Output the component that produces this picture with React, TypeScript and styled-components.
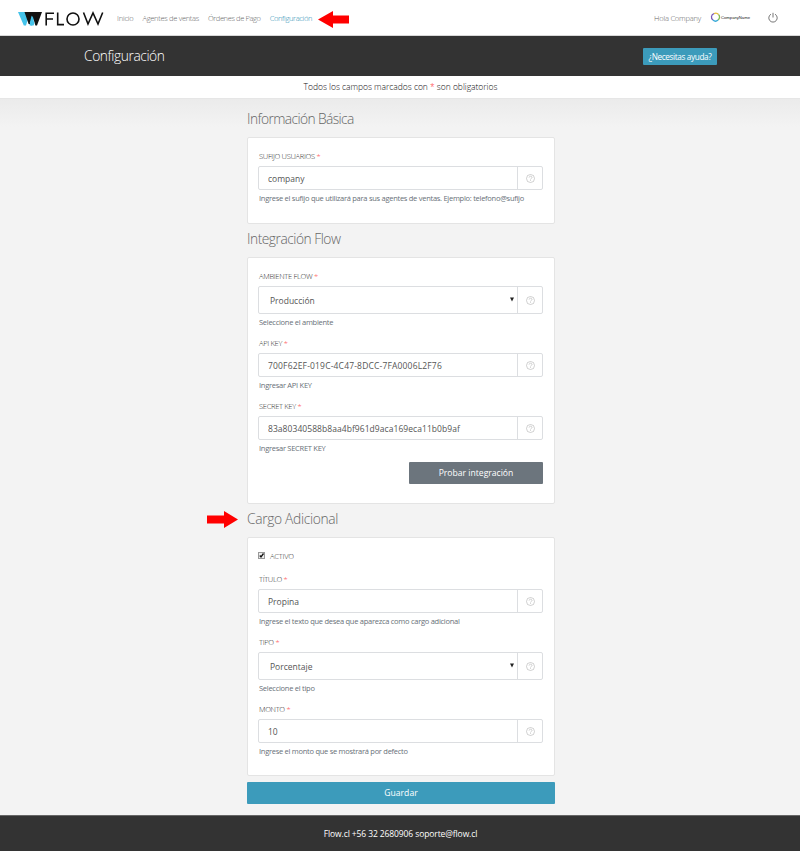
import React from "react";
import styled, { createGlobalStyle } from "styled-components";

const Global = createGlobalStyle`
  *{box-sizing:border-box}
  body{margin:0;background:#f3f3f3;font-family:"Open Sans","Noto Sans",sans-serif;color:#777}
  input,select,button{font-family:inherit}
`;

const Page = styled.div`display:flex;flex-direction:column;height:851px;width:800px;`;

const Navbar = styled.header`
  display:flex;align-items:center;height:36px;flex:none;background:#fff;
  border-bottom:1px solid #d8d8d8;padding:0 22px 0 18px;
`;
const Logo = styled.svg`width:86px;height:16px;display:block;flex:none;margin-top:2px;`;
const Nav = styled.nav`display:flex;margin:0 6px 0 13px;gap:9px;`;
const NavLink = styled.a<{ $active?: boolean; $track?: number }>`
  font-size:7.5px;line-height:12px;font-weight:300;white-space:nowrap;
  color:${(p) => (p.$active ? "#1f8db2" : "#666")};
  letter-spacing:${(p) => p.$track ?? -0.33}px;
`;
const Arrow = styled.svg`display:block;width:32px;height:17px;flex:none;`;
const NavArrow = styled.div`margin-top:3px;`;
const NavRight = styled.div`display:flex;align-items:center;margin-left:auto;`;
const Brand = styled.svg`width:42px;height:12px;margin:-2px 0 0 9px;`;
const Power = styled.svg`width:10px;height:11px;margin-left:16px;`;

const TitleBar = styled.div`
  display:flex;align-items:center;justify-content:space-between;height:40px;flex:none;
  background:#333;padding:0 83px 0 84px;
`;
const PageTitle = styled.h1`margin:0;font-size:13.8px;line-height:20px;font-weight:300;color:#fff;letter-spacing:-0.42px;`;
const HelpButton = styled.button`
  border:0;border-radius:1px;background:#3c9bbb;color:#fff;height:17px;width:74px;padding:0;
  font-size:8.2px;line-height:17px;letter-spacing:-0.36px;white-space:nowrap;
`;
const Notice = styled.div`
  height:23px;flex:none;background:#fff;border-bottom:1px solid #e6e6e6;text-align:center;
  font-size:8.5px;line-height:22px;font-weight:300;color:#111;letter-spacing:-0.03px;padding-left:1px;
`;
const Main = styled.main`
  flex:1;display:flex;flex-direction:column;align-items:center;padding:9px 0 0 2px;
  background:linear-gradient(#ebebeb,#f3f3f3 28px);
`;
const Section = styled.section`width:308px;`;
const HeadingRow = styled.div`display:flex;align-items:center;height:20px;padding-top:2px;position:relative;`;
const Heading = styled.h2<{ $track?: number }>`
  margin:0;font-size:13.8px;line-height:20px;font-weight:300;color:#666;
  letter-spacing:${(p) => p.$track ?? -0.4}px;
`;
const Pointer = styled.div`position:absolute;left:-41px;top:3px;`;
const Card = styled.div<{ $height: number; $after: number }>`
  height:${(p) => p.$height}px;margin:9px 0 ${(p) => p.$after}px;background:#fff;
  border:1px solid #e4e4e4;border-radius:2px;padding:12px 11px 0 10px;
`;
const FieldBlock = styled.div<{ $gap: number }>`
  margin-bottom:${(p) => p.$gap}px;
`;
const Label = styled.label`
  display:block;font-size:7.5px;line-height:12px;font-weight:300;color:#333;letter-spacing:-0.3px;
  padding-left:1px;
`;
const Star = styled.span`color:#f33;`;
const Group = styled.div<{ $tall?: boolean }>`
  display:flex;height:${(p) => (p.$tall ? 28 : 24)}px;margin-top:4px;
  border:1px solid #dcdee1;border-radius:2px;
`;
const Input = styled.input<{ $track?: number }>`
  flex:1;min-width:0;border:0;outline:0;background:transparent;padding:0 9px;color:#555;
  font-size:8.5px;letter-spacing:${(p) => p.$track ?? 0}px;
`;
const SelectBox = styled.div`
  flex:1;display:flex;align-items:center;justify-content:space-between;padding:1px 3px 0 11px;
  color:#555;font-size:8.5px;
`;
const Caret = styled.svg`width:4px;height:5px;margin-top:-2px;`;
const Addon = styled.span`
  width:25px;border-left:1px solid #dcdee1;display:flex;align-items:center;justify-content:center;
`;
const Hint = styled.div`
  margin-top:2px;font-size:7.5px;line-height:12px;color:#687078;white-space:nowrap;
  letter-spacing:-0.27px;padding-left:1px;
`;
const ActionButton = styled.button<{ $tone: string; $width: number }>`
  display:block;width:${(p) => p.$width}px;height:22px;
  border:0;border-radius:1px;padding:0;background:${(p) => p.$tone};color:#fff;
  font-size:8.6px;font-weight:500;line-height:22px;
`;
const ActionRight = styled.div`display:flex;justify-content:flex-end;`;
const SaveRow = styled.div`padding-top:1px;`;
const CheckRow = styled.label`
  display:flex;align-items:center;gap:5px;height:12px;margin-bottom:11px;
  font-size:7.5px;font-weight:300;color:#333;letter-spacing:-0.2px;
`;
const CheckBox = styled.svg`width:7px;height:7px;margin-top:-2px;`;
const Footer = styled.footer`
  height:36px;flex:none;background:#333;border-top:1px solid #666;color:#fff;text-align:center;
  font-size:8.5px;line-height:36px;letter-spacing:-0.1px;padding-left:1px;
`;

const RedArrow = ({ left }: { left?: boolean }) => (
  <Arrow viewBox="0 0 32 17">
    <path fill="#f00" d={left ? "M0 8.5 15 0V4.5H31V12.5H15V17Z" : "M32 8.5 18 17V12.5H1V4.5H18V0Z"} />
  </Arrow>
);

const HelpIcon = () => (
  <svg width="9" height="9" viewBox="0 0 9 9" fill="none" stroke="#bbb" strokeWidth=".7">
    <circle cx="4.5" cy="4.5" r="4" />
    <path d="M3.1 3.6C3.1 1.8 6 1.8 6 3.5 6 4.5 4.5 4.4 4.5 5.5M4.5 6.2V7" />
  </svg>
);

type FieldProps = {
  label: string; value: string; hint: string; gap?: number; select?: boolean; track?: number;
};
const Field = ({ label, value, hint, gap = 9, select, track }: FieldProps) => (
  <FieldBlock $gap={gap}>
    <Label>{label} <Star>*</Star></Label>
    <Group $tall={select}>
      {select ? (
        <SelectBox>
          <span>{value}</span>
          <Caret viewBox="0 0 4 5"><path d="M0 .5H4L2 4.5Z" fill="#222" /></Caret>
        </SelectBox>
      ) : (
        <Input defaultValue={value} $track={track} />
      )}
      <Addon><HelpIcon /></Addon>
    </Group>
    <Hint>{hint}</Hint>
  </FieldBlock>
);

export default function App() {
  return (
    <Page>
      <Global />
      <Navbar>
        <Logo viewBox="0 0 86 16">
          <path fill="#45c3ea" d="M0 1H12L8 14.5H5.8ZM7 1H18L14 14.5H11.8Z" />
          <path fill="#111" d="M6.5 1H16L11.8 13H10.6ZM13.5 1H24L19 14.5H17.4Z" />
          <path fill="#45c3ea" d="M13.6 4.5 16.4 12 15.6 14.5H13L11.9 11.5Z" />
          <g fill="none" stroke="#111" strokeWidth="1.6">
            <path d="M28.2 14.5V2.2H36M28.2 8H35M39.7 1.5V13.6H46M65.5 1.5 70 13 75 2 80 13 84.7 1.5" />
            <circle cx="55" cy="8" r="6" />
          </g>
        </Logo>
        <Nav>
          <NavLink $track={-0.2}>Inicio</NavLink>
          <NavLink $track={-0.3}>Agentes de ventas</NavLink>
          <NavLink $track={-0.38}>Órdenes de Pago</NavLink>
          <NavLink $active>Configuración</NavLink>
        </Nav>
        <NavArrow><RedArrow left /></NavArrow>
        <NavRight>
          <NavLink $track={-0.2}>Hola Company</NavLink>
          <Brand viewBox="0 0 42 12">
            <g fill="none" strokeWidth="1.3">
              <path stroke="#7b58b8" d="M3 9A3.6 3.6 0 0 1 4 2.6" />
              <path stroke="#e8bc3b" d="M4 2.6A3.6 3.6 0 0 1 8.5 3.5" />
              <path stroke="#82ba51" d="M8.5 3.5A3.6 3.6 0 0 1 8 9" />
              <path stroke="#36a9d8" d="M8 9A3.6 3.6 0 0 1 3 9" />
            </g>
            <text x="11" y="7.6" fontSize="4.4" fontFamily="Liberation Sans" fill="#222" textLength="29" lengthAdjust="spacingAndGlyphs">CompanyName</text>
          </Brand>
          <Power viewBox="0 0 10 11" fill="none" stroke="#777" strokeWidth="1">
            <path d="M3 2.2A4.2 4.2 0 1 0 7 2.2M5 .8V5.5" />
          </Power>
        </NavRight>
      </Navbar>
      <TitleBar>
        <PageTitle>Configuración</PageTitle>
        <HelpButton>¿Necesitas ayuda?</HelpButton>
      </TitleBar>
      <Notice>Todos los campos marcados con <Star>*</Star> son obligatorios</Notice>
      <Main>
        <Section>
          <HeadingRow><Heading $track={-0.6}>Información Básica</Heading></HeadingRow>
          <Card $height={87} $after={4}>
            <Field label="SUFIJO USUARIOS" value="company" hint="Ingrese el sufijo que utilizará para sus agentes de ventas. Ejemplo: telefono@sufijo" />
          </Card>
        </Section>
        <Section>
          <HeadingRow><Heading $track={-0.49}>Integración Flow</Heading></HeadingRow>
          <Card $height={247} $after={4}>
            <Field select label="AMBIENTE FLOW" value="Producción" hint="Seleccione el ambiente" />
            <Field label="API KEY" value="700F62EF-019C-4C47-8DCC-7FA0006L2F76" hint="Ingresar API KEY" track={0.17} />
            <Field label="SECRET KEY" value="83a80340588b8aa4bf961d9aca169eca11b0b9af" hint="Ingresar SECRET KEY" gap={8} track={0.06} />
            <ActionRight>
              <ActionButton $tone="#6c757d" $width={134}>Probar integración</ActionButton>
            </ActionRight>
          </Card>
        </Section>
        <Section>
          <HeadingRow>
            <Pointer><RedArrow /></Pointer>
            <Heading $track={-0.33}>Cargo Adicional</Heading>
          </HeadingRow>
          <Card $height={239} $after={5}>
            <CheckRow>
              <CheckBox viewBox="0 0 7 7"><rect x=".5" y=".5" width="6" height="6" fill="#eee" stroke="#999" /><path d="M1.8 3.5 3 5 5.5 1.5" fill="none" stroke="#111" strokeWidth="1.3" /></CheckBox>
              ACTIVO
            </CheckRow>
            <Field label="TÍTULO" value="Propina" hint="Ingrese el texto que desea que aparezca como cargo adicional" />
            <Field select label="TIPO" value="Porcentaje" hint="Seleccione el tipo" />
            <Field label="MONTO" value="10" hint="Ingrese el monto que se mostrará por defecto" />
          </Card>
        </Section>
        <SaveRow>
          <ActionButton $tone="#3c9bbb" $width={308}>Guardar</ActionButton>
        </SaveRow>
      </Main>
      <Footer>Flow.cl +56 32 2680906 soporte@flow.cl</Footer>
    </Page>
  );
}
